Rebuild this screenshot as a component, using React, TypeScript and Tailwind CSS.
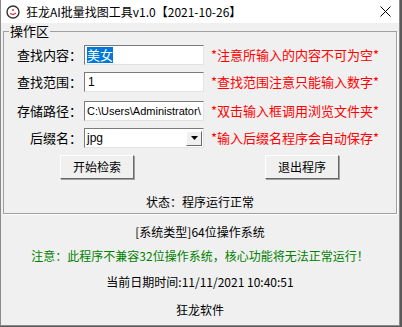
import React from 'react';

const cjk = "font-['Noto_Sans_CJK_SC','Noto_Sans',sans-serif]";

const sunken =
  'border border-t-[#7a7a7a] border-l-[#7a7a7a] border-b-[#e3e3e3] border-r-[#e3e3e3] bg-white';

const raised =
  'border border-t-white border-l-white border-b-[#696969] border-r-[#696969] bg-[#f0f0f0] shadow-[1px_1px_0_#a0a0a0]';

interface RowProps {
  label: string;
  note: string;
  mt: string;
  children: React.ReactNode;
}

const Row: React.FC<RowProps> = ({ label, note, mt, children }) => (
  <div className={`flex items-center h-[20px] ${mt}`}>
    <div className="w-[78px] text-right text-[13px] leading-[20px] text-black">{label}</div>
    <div className="ml-[2px] w-[120px] h-[20px]">{children}</div>
    <div className="ml-[7px] text-[13px] leading-[20px] text-[#ff0000] whitespace-nowrap">{note}</div>
  </div>
);

const App: React.FC = () => {
  return (
    <div className={`w-[402px] h-[327px] bg-[#5a5a5a] ${cjk}`}>
      <div className="w-[400px] h-[326px] bg-[#f0f0f0] border-l border-r border-b border-[#8a8a8a] flex flex-col">
        {/* Title bar */}
        <div className="h-[23px] bg-white flex items-center shrink-0">
          <svg width="14" height="14" viewBox="0 0 14 14" className="ml-[5px]">
            <circle cx="7" cy="7" r="6" fill="#fff" stroke="#333" strokeWidth="1.4" />
            <path d="M4 8.5 L7 9.5 L10 8" stroke="#d33" strokeWidth="1.2" fill="none" />
            <circle cx="7" cy="5" r="1" fill="#c44" />
          </svg>
          <span className="ml-[6px] text-[12px] leading-[14px] text-black whitespace-nowrap">
            狂龙AI批量找图工具v1.0【2021-10-26】
          </span>
          <svg width="11" height="11" viewBox="0 0 11 11" className="ml-auto mr-[8px]">
            <path d="M0.5 0.5 L10.5 10.5 M10.5 0.5 L0.5 10.5" stroke="#000" strokeWidth="1" />
          </svg>
        </div>

        {/* Group box */}
        <fieldset className="mx-[2px] mt-[1px] border border-[#a0a0a0] shadow-[1px_1px_0_#fff] pb-[4px]">
          <legend className="ml-[5px] px-[1px] text-[13px] leading-[14px] text-black">操作区</legend>

          <Row label="查找内容：" note="*注意所输入的内容不可为空*" mt="mt-[7px]">
            <div className={`${sunken} h-full flex items-center pl-[2px]`}>
              <span className="bg-[#0078d7] text-white text-[13px] leading-[16px]">美女</span>
            </div>
          </Row>

          <Row label="查找范围：" note="*查找范围注意只能输入数字*" mt="mt-[7px]">
            <div className={`${sunken} h-full flex items-center pl-[3px] text-[12px] font-['Liberation_Sans',sans-serif]`}>
              1
            </div>
          </Row>

          <Row label="存储路径：" note="*双击输入框调用浏览文件夹*" mt="mt-[9px]">
            <div className={`${sunken} h-full flex items-center pl-[2px] overflow-hidden whitespace-nowrap text-[11px] font-['Liberation_Sans',sans-serif]`}>
              C:\Users\Administrator\
            </div>
          </Row>

          <Row label="后缀名：" note="*输入后缀名程序会自动保存*" mt="mt-[7px]">
            <div className={`${sunken} h-full flex items-center pl-[2px] text-[12px] font-['Liberation_Sans',sans-serif]`}>
              <span className="flex-1">jpg</span>
              <div className={`${raised} shadow-none w-[16px] h-[15px] mr-[1px] flex items-center justify-center`}>
                <svg width="7" height="4" viewBox="0 0 7 4">
                  <path d="M0 0 H7 L3.5 4 Z" fill="#000" />
                </svg>
              </div>
            </div>
          </Row>

          <div className="mt-[7px] flex h-[24px]">
            <button className={`${raised} ml-[56px] w-[74px] h-[24px] text-[12px] leading-[14px] text-black`}>
              开始检索
            </button>
            <button className={`${raised} ml-[131px] w-[74px] h-[24px] text-[12px] leading-[14px] text-black`}>
              退出程序
            </button>
          </div>

          <div className="mt-[16px] text-center text-[12px] leading-[14px] text-black">
            状态：程序运行正常
          </div>
        </fieldset>

        <div className="mt-[11px] text-center text-[12px] leading-[14px] text-black">
          [系统类型]64位操作系统
        </div>
        <div className="mt-[10px] text-center text-[12px] leading-[14px] text-[#008000] whitespace-nowrap">
          注意：此程序不兼容32位操作系统，核心功能将无法正常运行！
        </div>
        <div className="mt-[12px] text-center text-[12px] leading-[14px] text-black">
          当前日期时间:11/11/2021 10:40:51
        </div>
        <div className="mt-[14px] text-center text-[12px] leading-[14px] text-black">
          狂龙软件
        </div>
      </div>
    </div>
  );
};

export default App;
